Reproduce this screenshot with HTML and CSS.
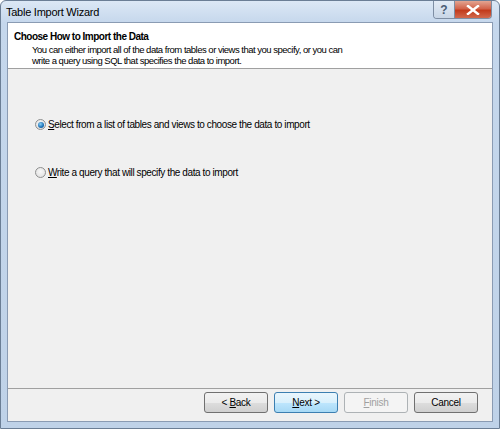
FILE: index.html
```html
<!DOCTYPE html>
<html>
<head>
<meta charset="utf-8">
<link rel="stylesheet" href="styles.css">
</head>
<body>
<div class="window">
  <div class="titlebar">
    <span class="title">Table Import Wizard</span>
    <div class="caption-buttons">
      <div class="cap-btn help">?</div>
      <div class="cap-btn close">
        <svg width="14" height="10" viewBox="0 0 14 10"><path d="M2 1 L12 9 M12 1 L2 9" stroke="#fff" stroke-width="2.4" stroke-linecap="square"/></svg>
      </div>
    </div>
  </div>
  <div class="client">
    <div class="header">
      <div class="h-title">Choose How to Import the Data</div>
      <div class="h-desc">You can either import all of the data from tables or views that you specify, or you can<br>write a query using SQL that specifies the data to import.</div>
    </div>
    <div class="body">
      <label class="option">
        <span class="radio checked"><span class="dot"></span></span>
        <span class="opt-text"><u>S</u>elect from a list of tables and views to choose the data to import</span>
      </label>
      <label class="option second">
        <span class="radio"></span>
        <span class="opt-text"><u>W</u>rite a query that will specify the data to import</span>
      </label>
    </div>
    <div class="footer">
      <button class="btn">&lt; <u>B</u>ack</button>
      <button class="btn default"><u>N</u>ext &gt;</button>
      <button class="btn disabled"><u>F</u>inish</button>
      <button class="btn">Cancel</button>
    </div>
  </div>
</div>
</body>
</html>
```

FILE: styles.css
```css
html, body {
  margin: 0;
  padding: 0;
}
body {
  font-family: "Liberation Sans", Arial, sans-serif;
  font-size: 10px;
  letter-spacing: -0.4px;
  color: #000;
}
.window {
  width: 500px;
  height: 429px;
  box-sizing: border-box;
  border: 1px solid #6b7e95;
  border-radius: 6px 6px 0 0;
  background: linear-gradient(to bottom, #dce8f5 0px, #c5d7ec 22px, #bfd2e8 100%);
  display: flex;
  flex-direction: column;
  padding: 0 6px 6px 6px;
}
.titlebar {
  height: 21px;
  display: flex;
  align-items: flex-start;
  justify-content: space-between;
  flex-shrink: 0;
}
.title {
  font-size: 11px;
  letter-spacing: -0.25px;
  margin-top: 5px;
  margin-left: -1px;
  color: #000;
}
.caption-buttons {
  display: flex;
  margin-right: 1px;
  border: 1px solid #7e8ea3;
  border-top: none;
  border-radius: 0 0 4px 4px;
  overflow: hidden;
  height: 17px;
}
.cap-btn {
  height: 17px;
  display: flex;
  align-items: center;
  justify-content: center;
}
.help {
  width: 20px;
  background: linear-gradient(to bottom, #e3ebf5, #c8d6e6);
  color: #4b5c74;
  font-weight: bold;
  font-size: 12px;
  letter-spacing: 0;
  border-right: 1px solid #7e8ea3;
}
.close {
  width: 36px;
  background: linear-gradient(to bottom, #e3a592 0%, #d2634a 45%, #c23b1c 55%, #d2694d 100%);
}
.client {
  flex: 1;
  border: 1px solid #8a9bb3;
  background: #f0f0f0;
  display: flex;
  flex-direction: column;
}
.header {
  background: #fff;
  height: 46px;
  box-sizing: border-box;
  border-bottom: 1px solid #a0a0a0;
  padding: 8px 0 0 6px;
  flex-shrink: 0;
}
.h-title {
  font-weight: bold;
  font-size: 10px;
  letter-spacing: -0.5px;
  line-height: 12px;
}
.h-desc {
  margin-left: 18px;
  line-height: 11px;
  margin-top: 1px;
  font-size: 9.5px;
  letter-spacing: -0.5px;
}
.body {
  flex: 1;
  padding: 49px 0 0 27px;
  display: flex;
  flex-direction: column;
}
.option {
  display: flex;
  align-items: center;
  height: 13px;
}
.option.second {
  margin-top: 35px;
}
.radio {
  width: 11px;
  height: 11px;
  border-radius: 50%;
  border: 1px solid #8e8f8f;
  background: radial-gradient(circle at 50% 40%, #f8f8f8, #dcdcdc);
  box-sizing: border-box;
  display: flex;
  align-items: center;
  justify-content: center;
  margin-right: 2px;
}
.radio .dot {
  width: 6px;
  height: 6px;
  border-radius: 50%;
  background: radial-gradient(circle at 40% 35%, #8bd0f5, #1a6fb5 60%, #10467a);
}
.footer {
  height: 33px;
  box-sizing: border-box;
  border-top: 1px solid #a0a0a0;
  display: flex;
  justify-content: flex-end;
  align-items: flex-start;
  gap: 6px;
  padding: 3px 14px 0 0;
  flex-shrink: 0;
}
.btn {
  font-family: "Liberation Sans", Arial, sans-serif;
  font-size: 10px;
  letter-spacing: -0.3px;
  width: 64px;
  height: 21px;
  border: 1px solid #707070;
  border-radius: 3px;
  background: linear-gradient(to bottom, #f2f2f2 0%, #ebebeb 50%, #dddddd 51%, #cfcfcf 100%);
  color: #000;
  padding: 0;
}
.btn.default {
  border-color: #3c7fb1;
  background: linear-gradient(to bottom, #eaf6fd 0%, #d9f0fc 50%, #bee6fd 51%, #a7d9f5 100%);
}
.btn.disabled {
  border-color: #adb2b5;
  background: #f4f4f4;
  color: #a0a0a0;
}
```
